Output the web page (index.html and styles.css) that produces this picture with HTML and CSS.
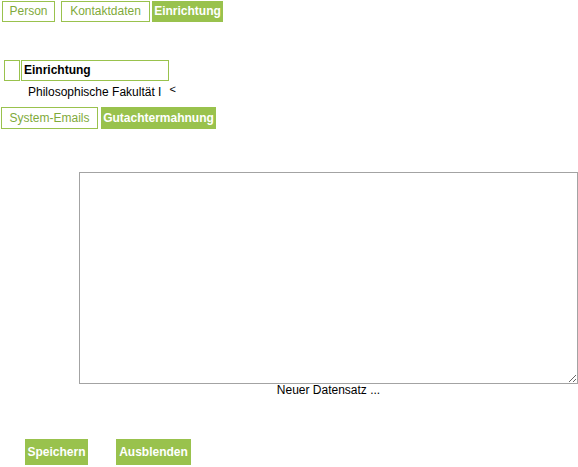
FILE: index.html
```html
<!DOCTYPE html>
<html>
<head>
<meta charset="utf-8">
<link rel="stylesheet" href="styles.css">
</head>
<body>
<div class="tabs">
  <span class="tab w-person">Person</span>
  <span class="tab w-kontakt">Kontaktdaten</span>
  <span class="tab active w-einr">Einrichtung</span>
</div>
<div class="field-row">
  <span class="check"></span>
  <span class="input">Einrichtung</span>
</div>
<div class="value-row">
  <span class="value">Philosophische Fakultät I</span>
  <span class="arrow">&lt;</span>
</div>
<div class="tabs2">
  <span class="tab w-sys">System-Emails</span>
  <span class="tab active w-gut">Gutachtermahnung</span>
</div>
<div class="editor">
  <textarea class="area"></textarea>
  <div class="caption">Neuer Datensatz ...</div>
</div>
<div class="actions">
  <span class="btn w-save">Speichern</span>
  <span class="btn w-hide">Ausblenden</span>
</div>
</body>
</html>
```
FILE: styles.css
```css
html, body {
  margin: 0;
  padding: 0;
  background: #fff;
}
body {
  font-family: "Liberation Sans", Arial, sans-serif;
  font-size: 12px;
  color: #000;
  width: 578px;
}
.tabs {
  display: flex;
  padding: 1px 0 0 2px;
}
.tab {
  display: block;
  box-sizing: border-box;
  height: 21px;
  line-height: 19px;
  text-align: center;
  white-space: nowrap;
  border: 1px solid #99c24d;
  color: #7faa3a;
}
.tab.active {
  background: #99c24d;
  color: #fff;
  font-weight: bold;
}
.w-person { width: 53px; }
.w-kontakt { width: 89px; margin-left: 6px; }
.w-einr { width: 71px; margin-left: 2px; }
.field-row {
  display: flex;
  margin-top: 38px;
  padding-left: 4px;
  gap: 1px;
}
.check {
  display: block;
  box-sizing: border-box;
  width: 16px;
  height: 21px;
  border: 1px solid #99c24d;
}
.input {
  display: block;
  box-sizing: border-box;
  width: 148px;
  height: 21px;
  line-height: 19px;
  border: 1px solid #99c24d;
  padding-left: 2px;
  font-weight: bold;
}
.value-row {
  display: flex;
  align-items: flex-start;
  padding-left: 28px;
  margin-top: 2px;
  height: 20px;
}
.value {
  line-height: 18px;
}
.arrow {
  margin-left: 8px;
  line-height: 12px;
  font-size: 11px;
}
.tabs2 {
  display: flex;
  margin-top: 4px;
  padding-left: 1px;
  gap: 3px;
}
.tabs2 .tab {
  height: 22px;
  line-height: 20px;
}
.w-sys { width: 97px; }
.w-gut { width: 115px; }
.editor {
  margin-top: 43px;
  margin-left: 79px;
  width: 499px;
}
.area {
  display: block;
  box-sizing: border-box;
  width: 499px;
  height: 212px;
  margin: 0;
  border: 1px solid #a3a3a3;
  resize: both;
  font-family: "Liberation Sans", Arial, sans-serif;
}
.caption {
  text-align: center;
  margin-top: -1px;
  margin-bottom: 1px;
  line-height: 14px;
}
.actions {
  display: flex;
  gap: 28px;
  margin-top: 42px;
  padding-left: 25px;
}
.btn {
  display: block;
  height: 26px;
  line-height: 26px;
  text-align: center;
  background: #99c24d;
  color: #fff;
  font-weight: bold;
}
.w-save { width: 63px; }
.w-hide { width: 75px; }
```
